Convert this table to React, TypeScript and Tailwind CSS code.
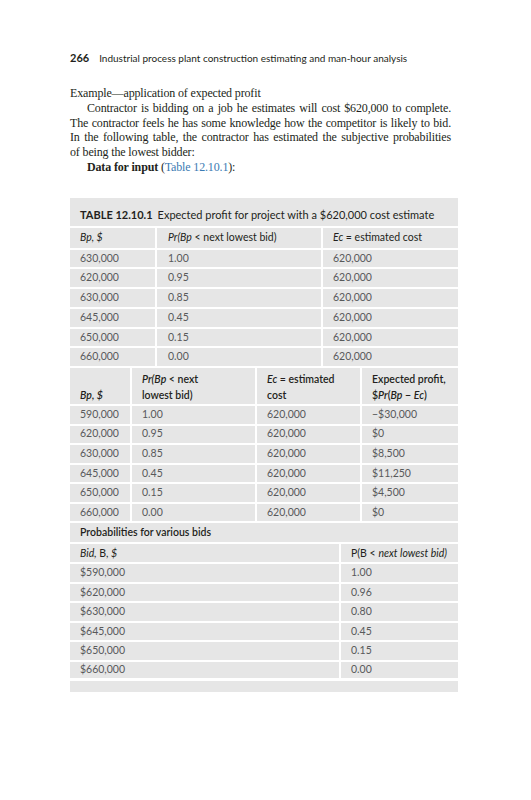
const t1 = [
  ["630,000", "1.00", "620,000"],
  ["620,000", "0.95", "620,000"],
  ["630,000", "0.85", "620,000"],
  ["645,000", "0.45", "620,000"],
  ["650,000", "0.15", "620,000"],
  ["660,000", "0.00", "620,000"],
];

const t2 = [
  ["590,000", "1.00", "620,000", "\u2212$30,000"],
  ["620,000", "0.95", "620,000", "$0"],
  ["630,000", "0.85", "620,000", "$8,500"],
  ["645,000", "0.45", "620,000", "$11,250"],
  ["650,000", "0.15", "620,000", "$4,500"],
  ["660,000", "0.00", "620,000", "$0"],
];

const t3 = [
  ["$590,000", "1.00"],
  ["$620,000", "0.96"],
  ["$630,000", "0.80"],
  ["$645,000", "0.45"],
  ["$650,000", "0.15"],
  ["$660,000", "0.00"],
];

const App = () => {
  return (
    <div className="w-[531px] h-[800px] bg-white pl-[70px] pt-[50px]">
      {/* running head */}
      <div className="flex items-baseline text-[10px] text-[#231f20] font-['Lato',sans-serif] h-[14px]">
        <span className="font-bold text-[11px] mr-[10px]">266</span>
        <span>Industrial process plant construction estimating and man-hour analysis</span>
      </div>

      {/* body text, one block per printed line */}
      <div className="mt-[22px] w-[381px] text-[12px] leading-[14.8px] tracking-[-0.15px] text-[#231f20] font-['Liberation_Serif',serif]">
        <p>Example—application of expected profit</p>
        <p className="pl-[17px] text-justify [text-align-last:justify] whitespace-nowrap">
          Contractor is bidding on a job he estimates will cost $620,000 to complete.
        </p>
        <p className="text-justify [text-align-last:justify]">
          The contractor feels he has some knowledge how the competitor is likely to bid.
        </p>
        <p className="text-justify [text-align-last:justify] whitespace-nowrap">
          In the following table, the contractor has estimated the subjective probabilities
        </p>
        <p>of being the lowest bidder:</p>
        <p className="pl-[17px]">
          <span className="font-bold">Data for input</span> (<span className="text-[#3b7bb3]">Table 12.10.1</span>):
        </p>
      </div>

      {/* table */}
      <div className="mt-[23px] w-[388px] bg-[#e6e6e6] font-['Lato',sans-serif] text-[10.5px] text-[#58595b]">
        <div className="h-[30px] flex items-center px-[10px] pt-[6px] border-b-2 border-white text-[#231f20] text-[11px] whitespace-nowrap">
          <span className="font-bold mr-[5px]">TABLE 12.10.1</span>
          <span>Expected profit for project with a $620,000 cost estimate</span>
        </div>

        <div className="h-[22px] flex border-b-2 border-white text-[#231f20]">
          <div className="w-[85px] px-[10px] flex items-center italic">Bp, $</div>
          <div className="w-[166px] px-[11px] flex items-center border-l-2 border-white">
            <span className="italic">Pr(Bp</span>&nbsp;&lt; next lowest bid)
          </div>
          <div className="flex-1 px-[10px] flex items-center border-l-2 border-white">
            <span className="italic">Ec</span>&nbsp;= estimated cost
          </div>
        </div>
        {t1.map((r, i) => (
          <div key={i} className="h-[19.7px] flex border-b-2 border-white">
            <div className="w-[85px] px-[10px] flex items-center">{r[0]}</div>
            <div className="w-[166px] px-[11px] flex items-center border-l-2 border-white">{r[1]}</div>
            <div className="flex-1 px-[10px] flex items-center border-l-2 border-white">{r[2]}</div>
          </div>
        ))}

        <div className="h-[38px] flex border-b-2 border-white text-[#231f20] font-semibold leading-[16px]">
          <div className="w-[60px] px-[10px] flex items-end pb-[1px] italic">Bp, $</div>
          <div className="w-[125px] px-[10px] flex items-end pb-[1px] border-l-2 border-white">
            <span>
              <span className="italic">Pr(Bp</span> &lt; next
              <br />
              lowest bid)
            </span>
          </div>
          <div className="w-[105px] px-[10px] flex items-end pb-[1px] border-l-2 border-white">
            <span>
              <span className="italic">Ec</span> = estimated
              <br />
              cost
            </span>
          </div>
          <div className="flex-1 px-[10px] flex items-end pb-[1px] border-l-2 border-white">
            <span>
              Expected profit,
              <br />$<span className="italic">Pr</span>(<span className="italic">Bp</span> − <span className="italic">Ec</span>)
            </span>
          </div>
        </div>
        {t2.map((r, i) => (
          <div key={i} className="h-[19.6px] flex border-b-2 border-white">
            <div className="w-[60px] px-[10px] flex items-center">{r[0]}</div>
            <div className="w-[125px] px-[10px] flex items-center border-l-2 border-white">{r[1]}</div>
            <div className="w-[105px] px-[10px] flex items-center border-l-2 border-white">{r[2]}</div>
            <div className="flex-1 px-[10px] flex items-center border-l-2 border-white">{r[3]}</div>
          </div>
        ))}

        <div className="h-[21px] flex items-center px-[10px] border-b-2 border-white text-[#231f20] font-semibold">
          Probabilities for various bids
        </div>
        <div className="h-[20px] flex border-b-2 border-white text-[#231f20]">
          <div className="w-[269px] px-[10px] flex items-center">
            <span className="italic">Bid,</span>&nbsp;B, <span className="italic">&nbsp;$</span>
          </div>
          <div className="flex-1 px-[10px] flex items-center border-l-2 border-white">
            P(B &lt;&nbsp;<span className="italic">next lowest bid)</span>
          </div>
        </div>
        {t3.map((r, i) => (
          <div key={i} className={`h-[19.5px] flex ${i === 5 ? "border-b-[3px]" : "border-b-2"} border-white`}>
            <div className="w-[269px] px-[10px] flex items-center">{r[0]}</div>
            <div className="flex-1 px-[10px] flex items-center border-l-2 border-white">{r[1]}</div>
          </div>
        ))}
        <div className="h-[11px]" />
      </div>
    </div>
  );
};

export default App;
